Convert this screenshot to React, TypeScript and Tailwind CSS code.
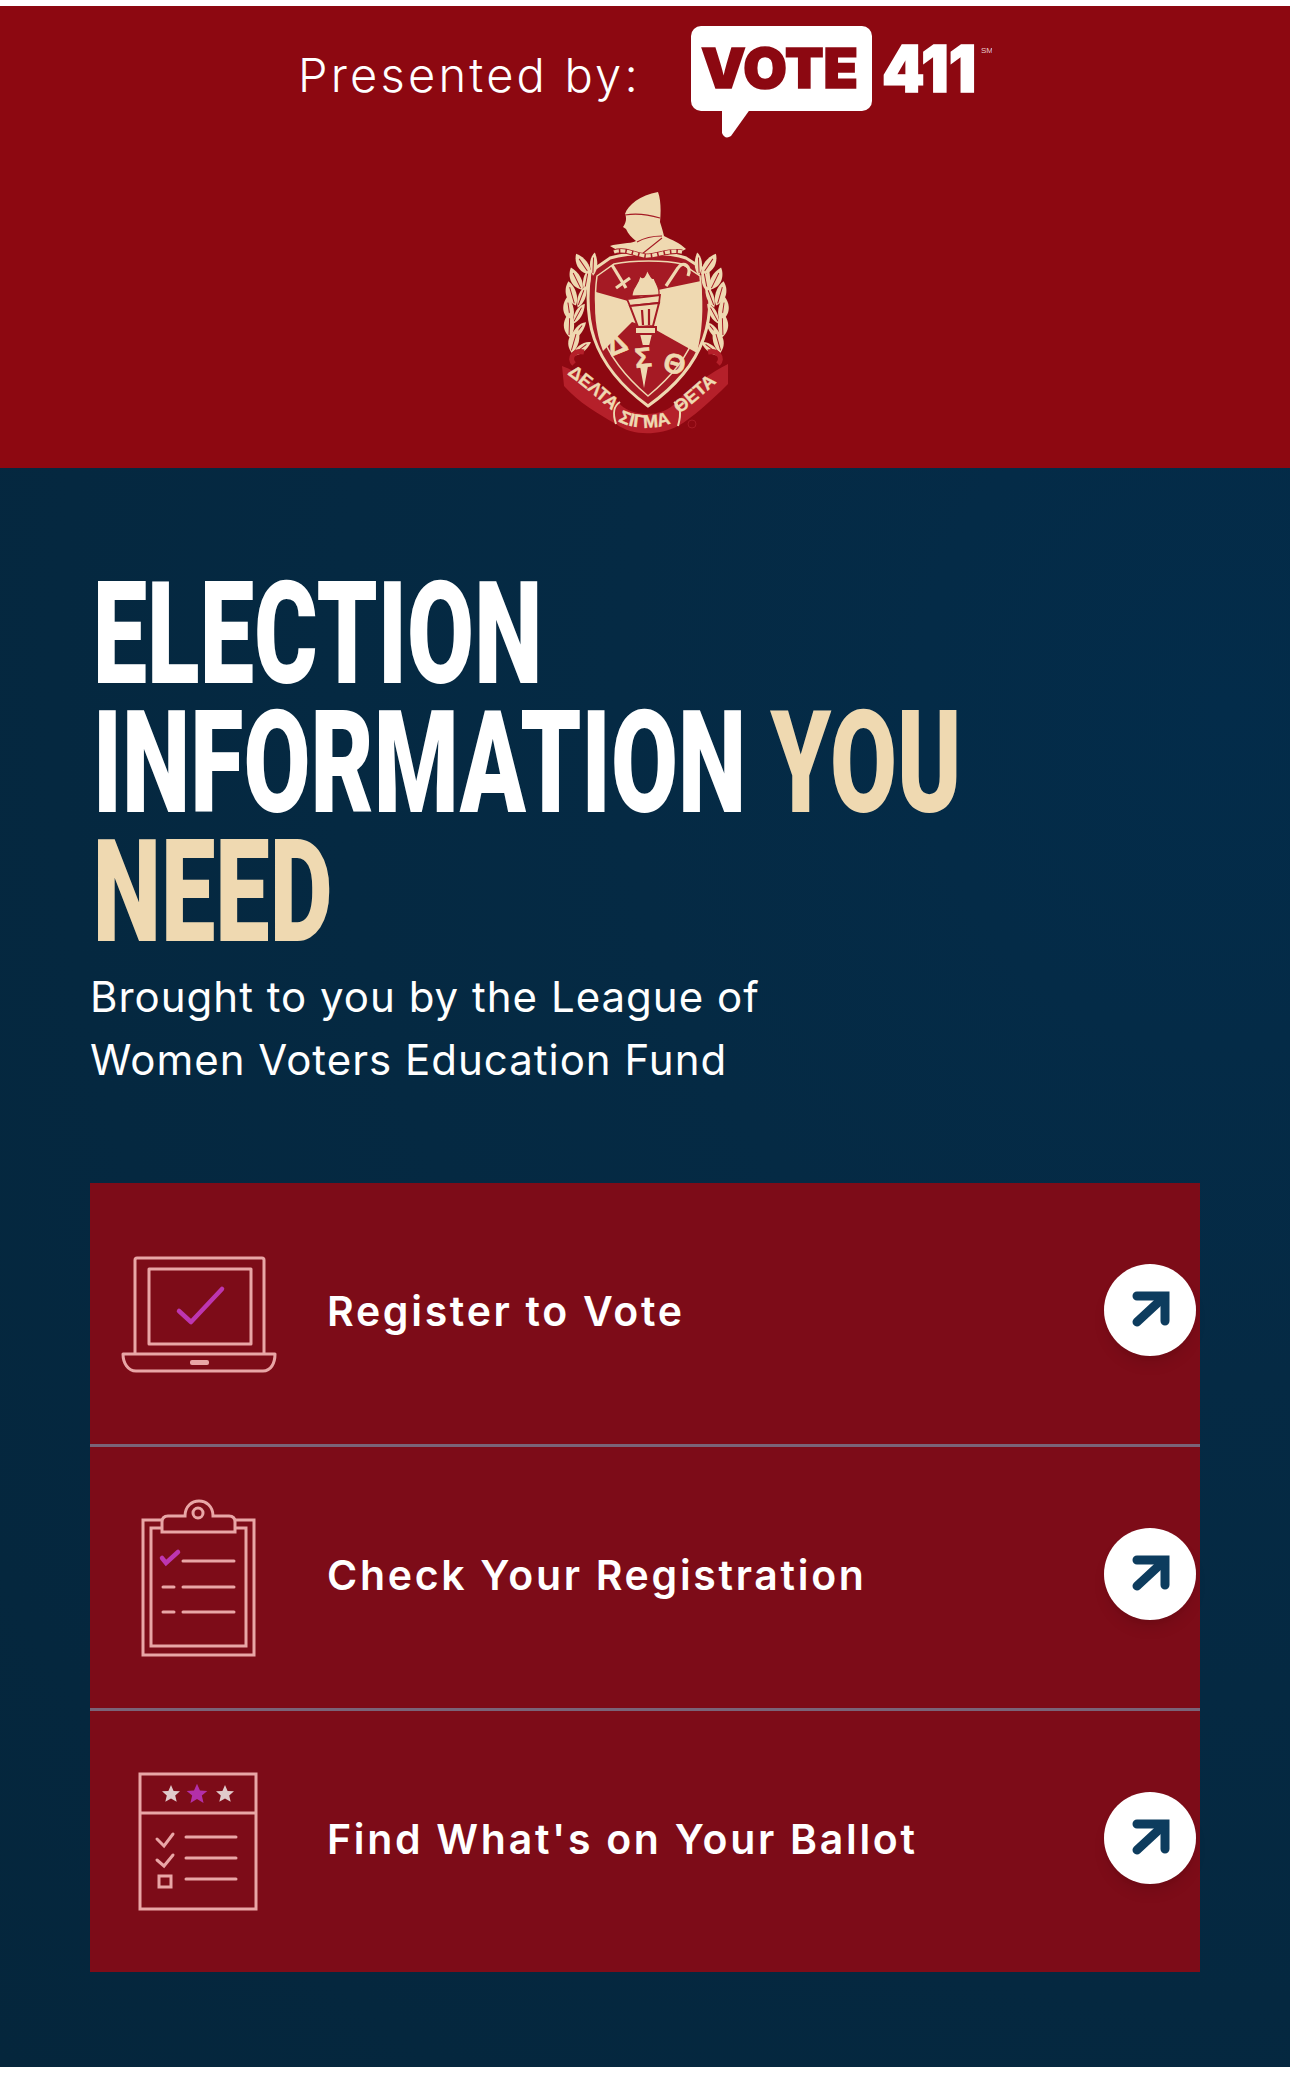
const rows = [
  { label: 'Register to Vote', icon: <LaptopIcon /> },
  { label: 'Check Your Registration', icon: <ClipboardIcon /> },
  { label: "Find What's on Your Ballot", icon: <BallotIcon /> },
];

const leafRows = [
  [46, 86, -30], [39, 101, -22], [34, 116, -12], [31, 132, -4], [31, 148, 6], [35, 164, 20],
];

function Leaf({ x, y, angle }: { x: number; y: number; angle: number }) {
  return (
    <g transform={`translate(${x} ${y}) rotate(${angle}) scale(1.2)`}>
      <path d="M0 8 C-9 2 -7 -8 -2 -13 C3 -7 4 2 0 8Z" fill="#efd9b1" />
      <path d="M1 10 C7 8 11 2 12 -6 C6 -5 1 2 1 10Z" fill="#efd9b1" />
      <path d="M-1 6 L-2 -8 M2 8 L9 -3" stroke="#a51a24" strokeWidth="0.8" />
    </g>
  );
}

function Crest() {
  return (
    <svg viewBox="-5 0 220 270" className="h-[270px] w-[220px]">
      {/* shield */}
      <path d="M50 92 L70 78 C90 72 130 72 146 78 L168 92 C174 135 170 182 108 226 C48 182 44 135 50 92Z" fill="#a51a24" stroke="#efd9b1" strokeWidth="3" />
      <path d="M57 96 L74 84 C92 80 126 80 142 84 L160 96 C164 132 162 172 108 216 C56 172 52 132 57 96Z" fill="#a51a24" stroke="#efd9b1" strokeWidth="1.5" />
      <path d="M56 112 L88 121 L118 110 L161 101 C164 130 162 152 157 173 L116 150 L92 142 L63 171 C55 150 54 130 56 112Z" fill="#efd9b1" />

      {/* bust */}
      <path
        d="M85 34 C88 25 100 15 118 12 C121 20 121 32 120 42 C122 48 123 52 124 56 C132 60 140 63 146 69 C130 78 92 80 70 66 C78 63 90 64 96 61 C92 58 88 54 86 49 L83 47 C86 43 87 38 85 34Z"
        fill="#efd9b1"
      />
      <path d="M85 35 C96 33 110 35 120 38 M97 62 C104 58 112 56 122 56 M102 74 L122 58" stroke="#a51a24" strokeWidth="1.1" fill="none" />
      <path d="M74 72 C84 68 96 75 106 76 C118 76 130 69 142 72" stroke="#a51a24" strokeWidth="5" fill="none" />
      <path d="M74 72 C84 68 96 75 106 76 C118 76 130 69 142 72" stroke="#efd9b1" strokeWidth="3.4" strokeDasharray="5 1.5" fill="none" />

      {/* dagger and crook */}
      <path d="M72 85 L86 108" stroke="#efd9b1" strokeWidth="3.2" />
      <path d="M76 108 L90 98" stroke="#efd9b1" strokeWidth="3.2" />
      <path d="M126 106 L138 88 C143 80 152 86 148 96" stroke="#efd9b1" strokeWidth="3.2" fill="none" />

      {/* torch */}
      <path d="M92 116 C92 107 98 106 100 96 C103 100 106 96 107 90 C110 95 112 100 114 98 C116 104 120 108 119 115Z" fill="#efd9b1" stroke="#a51a24" strokeWidth="1.2" />
      <path d="M87 119 L120 115 L119 123 L90 126Z" fill="#efd9b1" stroke="#a51a24" strokeWidth="1.8" />
      <path d="M90 126 L119 123 L113 146 L98 147Z" fill="#efd9b1" stroke="#a51a24" strokeWidth="2" />
      <path d="M102 130 L103 145 M109 129 L109 145" stroke="#a51a24" strokeWidth="2.2" />
      <path d="M95 147 H116 V154 H95Z M99 154 H113 L110 166 H102Z" fill="#efd9b1" stroke="#a51a24" strokeWidth="2" />

      {/* blade below the letters */}
      <path d="M100 186 L104 208 L108 186Z" fill="#efd9b1" />

      {/* greek letters on the shield */}
      <g fontFamily="'Liberation Sans', sans-serif" fontWeight="700" fill="#efd9b1" stroke="#efd9b1" strokeWidth="0.6" fontSize="28" textAnchor="middle">
        <text x="80" y="173" transform="rotate(-22 80 173)">Δ</text>
        <text x="104" y="187" transform="rotate(-6 104 187)">Σ</text>
        <text x="132" y="193" transform="rotate(16 132 193)">Θ</text>
      </g>

      {/* laurel */}
      {leafRows.map(([x, y, a]) => (
        <Leaf key={`l${y}`} x={x} y={y} angle={a} />
      ))}
      {leafRows.map(([x, y, a]) => (
        <g key={`r${y}`} transform="translate(212 0) scale(-1 1)">
          <Leaf x={x} y={y} angle={a} />
        </g>
      ))}

      {/* ribbon */}
      <path d="M22 186 C38 192 60 206 78 222 C90 238 124 238 136 222 C152 206 172 192 188 184 L188 204 C170 222 152 238 138 246 C118 256 92 256 76 244 C58 234 38 222 24 206Z" fill="#b5202a" />
      <path d="M76 244 C72 232 74 226 80 222 M138 246 C142 232 140 226 134 222" stroke="#efd9b1" strokeWidth="2" fill="none" />
      <path d="M44 172 C34 170 28 178 34 184 M168 172 C178 170 184 178 178 184" stroke="#b5202a" strokeWidth="5" fill="none" />
      <defs>
        <path id="ribbonLeft" d="M27 194 C42 205 58 218 76 234" />
        <path id="ribbonMid" d="M78 241 C94 250 118 250 136 241" />
        <path id="ribbonRight" d="M140 234 C156 220 172 208 188 191" />
      </defs>
      <g fontFamily="'Liberation Sans', sans-serif" fontWeight="700" fontSize="18" fill="#efd9b1" stroke="#efd9b1" strokeWidth="0.4">
        <text><textPath href="#ribbonLeft">ΔΕΛΤΑ</textPath></text>
        <text><textPath href="#ribbonMid">ΣΙΓΜΑ</textPath></text>
        <text><textPath href="#ribbonRight">ΘΕΤΑ</textPath></text>
      </g>
      <circle cx="152" cy="244" r="4" fill="none" stroke="#a51a24" strokeWidth="1" />
    </svg>
  );
}

function VoteLogo() {
  return (
    <svg viewBox="0 0 301 112" className="h-[112px] w-[301px] shrink-0">
      <rect x="0" y="0" width="181" height="85" rx="10" fill="#fff" />
      <path d="M31 82 L31 107 Q34 114 40 110 L60 82Z" fill="#fff" />
      <text x="10" y="62" fontFamily="Inter, sans-serif" fontWeight="900" fontSize="55" fill="#8c0811" stroke="#8c0811" strokeWidth="1.6" textLength="157" lengthAdjust="spacingAndGlyphs">
        VOTE
      </text>
      <text x="191" y="66" fontFamily="Inter, sans-serif" fontWeight="900" fontSize="64" fill="#fff" stroke="#fff" strokeWidth="1.6" textLength="94" lengthAdjust="spacingAndGlyphs">
        411
      </text>
      <text x="290" y="27" fontFamily="'Liberation Sans', sans-serif" fontSize="8" fill="#e8c9c9">
        SM
      </text>
    </svg>
  );
}

function LaptopIcon() {
  return (
    <svg viewBox="18 -7 200 200" className="h-[200px] w-[200px]" fill="none" stroke="#e9a6a6" strokeWidth="3" strokeLinejoin="round">
      <path d="M54 132 V39 Q54 37 56 37 H181 Q183 37 183 39 V132" />
      <rect x="68" y="48" width="102" height="75" />
      <path d="M42 133 H194 C194 142 190 150 182 150 H55 C47 150 42 142 42 133Z" />
      <rect x="109" y="139" width="19" height="5" rx="2" fill="#e9a6a6" stroke="none" />
      <path d="M98 90 L110 101 L141 68" stroke="#bd36b0" strokeWidth="4.5" strokeLinecap="round" />
    </svg>
  );
}

function ClipboardIcon() {
  return (
    <svg viewBox="0 -2 200 200" className="h-[200px] w-[200px]" fill="none" stroke="#e9a6a6" strokeWidth="3">
      <path d="M63 40 H44 V175 H155 V40 H136" />
      <path d="M63 48 H52 V166 H147 V48 H136" />
      <path d="M63 52 V42 Q63 36 69 36 H86 C86 16 114 16 114 36 H130 Q136 36 136 42 V52Z" />
      <circle cx="99" cy="33" r="5" />
      <path d="M84 81 H135 M84 107 H135 M84 132 H135 M64 107 H75 M64 132 H75" strokeLinecap="round" />
      <path d="M63 78 L67 83 L79 72" stroke="#bd36b0" strokeWidth="4.5" strokeLinecap="round" />
    </svg>
  );
}

function BallotIcon() {
  const star = 'M0 -9 L2.6 -3 L9 -2.7 L4.2 1.4 L5.7 7.8 L0 4.4 L-5.7 7.8 L-4.2 1.4 L-9 -2.7 L-2.6 -3Z';
  return (
    <svg viewBox="0 -7 200 200" className="h-[200px] w-[200px]" fill="none" stroke="#e9a6a6" strokeWidth="3">
      <rect x="41" y="25" width="116" height="135" />
      <path d="M41 64 H157" />
      <path d={star} transform="translate(72 45)" fill="#e0cbcb" stroke="none" />
      <path d={star} transform="translate(98 45) scale(1.15)" fill="#b32fa8" stroke="none" />
      <path d={star} transform="translate(126 45)" fill="#e0cbcb" stroke="none" />
      <path d="M58 90 L65 97 L74 85 M58 111 L65 117 L74 106" strokeLinecap="round" strokeWidth="3" />
      <rect x="60" y="127" width="12" height="11" />
      <path d="M87 88 H137 M87 109 H137 M87 130 H137" strokeLinecap="round" />
    </svg>
  );
}

function ArrowBadge() {
  return (
    <div className="mb-2 mr-1 flex h-[92px] w-[92px] shrink-0 items-center justify-center rounded-full bg-white shadow-lg">
      <svg viewBox="0 0 92 92" className="h-[92px] w-[92px]" fill="none" stroke="#0d3c5e" strokeWidth="9">
        <path d="M33 32 H61 V57" strokeLinecap="round" />
        <path d="M60 33 L33 58" strokeLinecap="round" />
      </svg>
    </div>
  );
}

export default function App() {
  return (
    <div className="h-[2075px] overflow-hidden bg-white pt-[6px] font-['Inter',sans-serif] text-white">
      <header className="flex flex-col items-center bg-[#8d0811] pb-[18px] pt-[20px]">
        <div className="flex items-center gap-[50px]">
          <span className="mb-[14px] whitespace-nowrap text-[47px] font-light tracking-[3.2px]">Presented by:</span>
          <VoteLogo />
        </div>
        <div className="mt-[42px]">
          <Crest />
        </div>
      </header>

      <main className="h-[1599px] bg-[#05273f] bg-[radial-gradient(ellipse_at_95%_15%,#032c4a_0%,#052a44_35%,#05263c_100%)] px-[90px] pt-[102px]">
        <h1 className="font-['Roboto',sans-serif] text-[142px] font-black leading-[129px]">
          <span className="block w-max origin-left scale-x-[0.684] whitespace-nowrap pl-[4px]">ELECTION</span>
          <span className="block w-max origin-left scale-x-[0.684] whitespace-nowrap pl-[4px]">
            INFORMATION <span className="text-[#efd9b1]">YOU</span>
          </span>
          <span className="block w-max origin-left scale-x-[0.684] whitespace-nowrap pl-[4px] text-[#efd9b1]">NEED</span>
        </h1>
        <p className="mt-[8px] text-[42px] font-normal leading-[63px] tracking-[1px]">
          Brought to you by the League of
          <br />
          Women Voters Education Fund
        </p>

        <div className="mt-[92px] flex flex-col gap-[3px] bg-[#7a6478]">
          {rows.map((row) => (
            <div key={row.label} className="flex h-[261px] items-center bg-[#7d0c18]">
              <div className="flex w-[218px] shrink-0 justify-center">{row.icon}</div>
              <div className="mb-1 ml-[19px] flex-1 text-[41px] font-semibold tracking-[2.7px]">{row.label}</div>
              <ArrowBadge />
            </div>
          ))}
        </div>
      </main>
    </div>
  );
}
